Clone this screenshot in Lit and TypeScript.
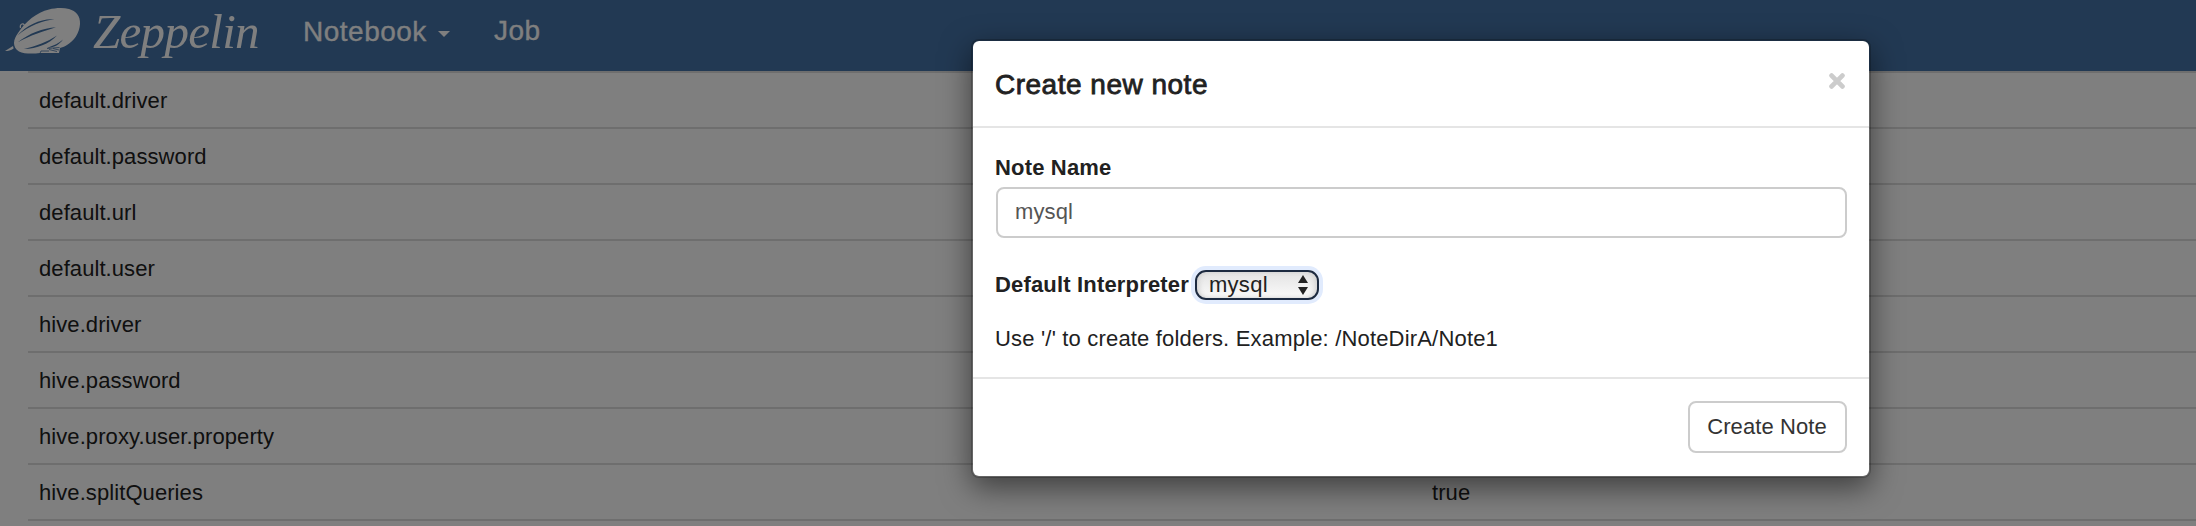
import { LitElement, html, css, svg } from "lit";
import { customElement, state } from "lit/decorators.js";

@customElement("zeppelin-mark")
class ZeppelinMark extends LitElement {
  static styles = css`
    :host { display: block; width: 76px; height: 50px; }
    svg { display: block; }
    .hull { fill: #fff; }
    .gap { fill: #4472a6; }
    .line { fill: none; stroke: #4472a6; stroke-width: 0.8; }
    .fin { fill: none; stroke: #fff; stroke-width: 1.2; }
  `;
  render() {
    return html`<svg width="76" height="50" viewBox="5 5 76 50">
      ${svg`
        <path class="hull" d="M14 43 C14 39 16 36 18 33 C25 22 37 12 49 9.500 C55 8 63 7.500 69 9 C76 11 80.500 16 80 24 C79.500 33 74 41 67 45 C64 47 62 47.500 60 48 L59 53 L40 53 C33 54 24 54 19 51.500 C15.500 49.500 14 46 14 43 Z"/>
        <path class="hull" d="M5 51 L13 46 L13.600 48.500 C11 50.500 8 51 5 51 Z"/>
        <path class="fin" d="M20.500 28 C19.500 24.500 23 22 24.500 25.500"/>
        <path class="gap" d="M17.500 35.500 C27 24.500 42 18 54.500 19.300 C42 20.500 29 26 17.500 35.500 Z"/>
        <path class="gap" d="M17.500 42.500 C29 33.500 43 28 56 27.300 C44 31 31 35 17.500 42.500 Z"/>
        <path class="gap" d="M24 49 C37 46 47 42 57 35.500 C49 44 37 48.500 24 49 Z"/>
        <path class="gap" d="M47 48 C54 45.500 59 43 63 39.500 C59 45 54 47.500 47 48 Z"/>
        <path class="line" d="M40 53.300 L41 51 L49 51 M47 48.500 L59.500 47.500 M49 49.500 L57 51.500 M53 48.500 L59 50"/>
      `}
    </svg>`;
  }
}

@customElement("nav-bar")
class NavBar extends LitElement {
  static styles = css`
    :host { display: flex; height: 71px; background: #4472a6; color: #fff; }
    zeppelin-mark { margin: 5px 0 0 5px; }
    .brand {
      font: italic 49px/60px "Liberation Serif", serif;
      margin: 2px 0 0 12px; width: 168px; white-space: nowrap;
      letter-spacing: -0.7px;
    }
    .link { font: 28px/32px "Liberation Sans", sans-serif; margin-top: 15px; -webkit-text-stroke: 0.3px #fff; letter-spacing: 0.5px; }
    .notebook { margin-left: 42px; width: 125px; padding-top: 1px; }
    .caret { width: 0; height: 0; margin: 31px 0 0 10px; border: 6px solid transparent; border-top-color: #fff; border-bottom: 0; }
    .job { margin-left: 44px; }
  `;
  render() {
    return html`
      <zeppelin-mark></zeppelin-mark>
      <div class="brand">Zeppelin</div>
      <div class="link notebook">Notebook</div><i class="caret"></i>
      <div class="link job">Job</div>
    `;
  }
}

@customElement("note-dialog")
class NoteDialog extends LitElement {
  static styles = css`
    :host {
      display: flex; flex-direction: column; box-sizing: border-box;
      width: 900px; height: 439px; background: #fff; background-clip: padding-box;
      border: 2px solid rgba(0, 0, 0, 0.2); border-radius: 8px;
      box-shadow: 0 10px 30px rgba(0, 0, 0, 0.5);
      font: 22px/32px "Liberation Sans", sans-serif; color: #212121;
    }
    .head { display: flex; justify-content: space-between; height: 85px; border-bottom: 2px solid #e5e5e5; padding: 0 24px 0 22px; }
    .title { font-size: 28px; line-height: 40px; margin-top: 24px; -webkit-text-stroke: 0.8px #212121; letter-spacing: 0.5px; }
    .close { margin-top: 32px; width: 16px; height: 16px; }
    .body { box-sizing: border-box; height: 249px; padding: 24px 22px 0 23px; }
    label { display: block; font-weight: 700; letter-spacing: 0.17px; margin-left: -1px; }
    .field { box-sizing: border-box; height: 51px; margin-top: 3px; padding-left: 17px; border: 2px solid #ccc; border-radius: 8px; line-height: 46px; color: #555; letter-spacing: 0.1px; }
    .row { display: flex; align-items: center; margin-top: 31px; }
    .select {
      display: flex; align-items: center; justify-content: space-between; box-sizing: border-box;
      width: 124px; height: 30px; margin-left: 6px; padding: 0 9px 0 12px;
      border: 2px solid #1c2a40; border-radius: 11px;
      background: linear-gradient(#e3e3e3, #fafafa);
      box-shadow: 0 0 0 4px #e1ebfd, inset 3px 0 5px -1px #d0d0d0, inset -3px 0 5px -1px #d0d0d0;
      line-height: 26px; letter-spacing: 0.3px;
    }
    .hint { margin: 22px 0 0 -1px; letter-spacing: 0.18px; }
    .foot { display: flex; flex: 1; justify-content: flex-end; align-items: flex-start; border-top: 2px solid #e5e5e5; padding: 22px 22px 0; }
    button { box-sizing: border-box; width: 159px; height: 52px; padding: 0 1px 0 0; font: inherit; letter-spacing: 0.1px; color: #333; background: #fff; border: 2px solid #ccc; border-radius: 8px; }
  `;
  @state() private noteName = "mysql";
  @state() private interpreter = "mysql";
  render() {
    return html`
      <div class="head">
        <div class="title">Create new note</div>
        <svg class="close" viewBox="0 0 16 16"><path d="M2.600 2.600 L13.400 13.400 M13.400 2.600 L2.600 13.400" stroke="#ccc" stroke-width="4.800" stroke-linecap="round"/></svg>
      </div>
      <div class="body">
        <label>Note Name</label>
        <div class="field">${this.noteName}</div>
        <div class="row">
          <label>Default Interpreter</label>
          <div class="select">
            <span>${this.interpreter}</span>
            <svg width="10" height="20" viewBox="0 0 10 20"><path d="M5 0 L10 8 H0 Z M0 12 H10 L5 20 Z" fill="#222"/></svg>
          </div>
        </div>
        <div class="hint">Use '/' to create folders. Example: /NoteDirA/Note1</div>
      </div>
      <div class="foot"><button>Create Note</button></div>
    `;
  }
}

@customElement("app-root")
class AppRoot extends LitElement {
  static styles = css`
    :host { display: block; position: relative; width: 2196px; height: 526px; overflow: hidden; background: #fff; font: 22px/54px "Liberation Sans", sans-serif; color: #212121; }
    .table { padding-left: 28px; }
    .line { display: grid; grid-template-columns: 1393px 1fr; box-sizing: border-box; height: 56px; border-top: 2px solid #ddd; padding-top: 1px; letter-spacing: 0.08px; }
    .cell { padding-left: 11px; }
    .backdrop { position: absolute; inset: 0; background: rgba(0, 0, 0, 0.5); }
    note-dialog { position: absolute; left: 971px; top: 39px; }
  `;
  private properties: [string, string][] = [
    ["default.driver", ""],
    ["default.password", ""],
    ["default.url", ""],
    ["default.user", ""],
    ["hive.driver", ""],
    ["hive.password", ""],
    ["hive.proxy.user.property", ""],
    ["hive.splitQueries", "true"],
    ["", ""],
  ];
  render() {
    return html`
      <nav-bar></nav-bar>
      <div class="table">
        ${this.properties.map(([name, value]) => html`<div class="line"><div class="cell">${name}</div><div class="cell">${value}</div></div>`)}
      </div>
      <div class="backdrop"></div>
      <note-dialog></note-dialog>
    `;
  }
}
